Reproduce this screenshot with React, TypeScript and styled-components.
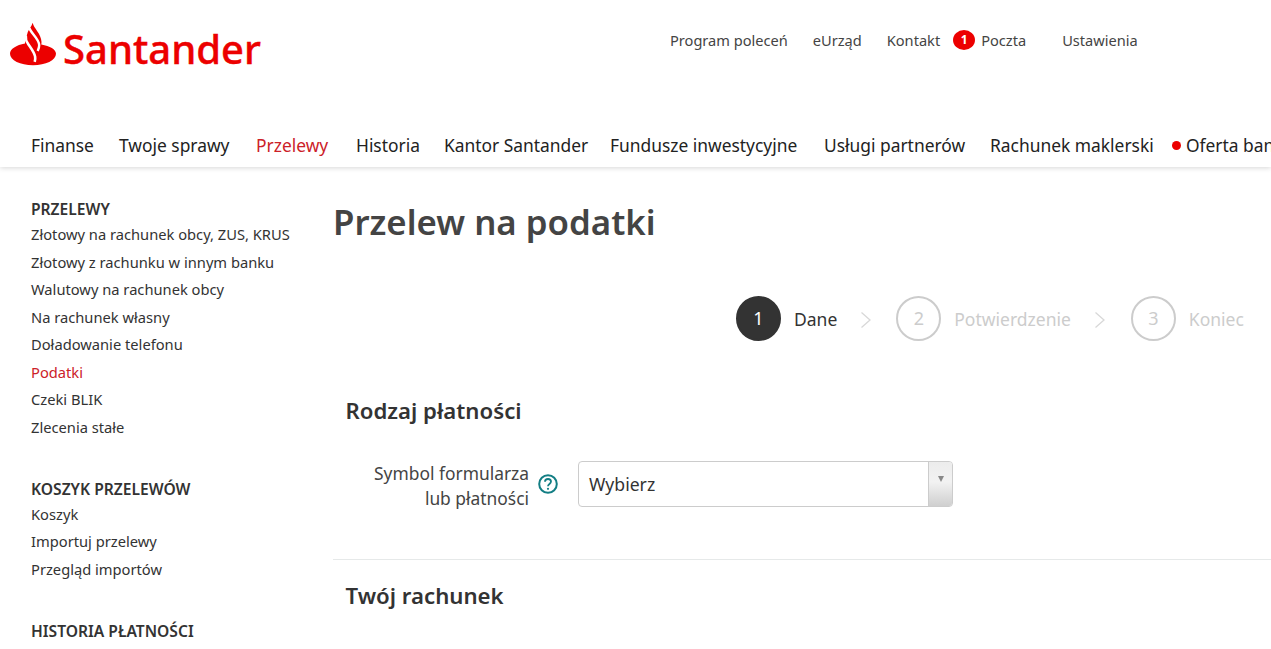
import React from "react";
import styled, { createGlobalStyle } from "styled-components";

const GlobalStyle = createGlobalStyle`
  html, body {
    margin: 0;
    padding: 0;
    height: 100%;
    overflow: hidden;
    background: #fff;
  }
  body {
    font-family: "Noto Sans", "Open Sans", sans-serif;
    color: #333;
  }
`;

const Page = styled.div`
  width: 1271px;
  height: 649px;
  overflow: hidden;
`;

const Header = styled.header`
  height: 167px;
  display: flex;
  flex-direction: column;
  box-shadow: 0 1px 5px rgba(0, 0, 0, 0.16);
  position: relative;
`;

const TopRow = styled.div`
  height: 133px;
  display: flex;
  align-items: flex-start;
`;

const Logo = styled.div`
  display: flex;
  align-items: flex-start;
  padding: 22px 0 0 10px;
  width: 660px;
`;

const Wordmark = styled.span`
  font-family: "Noto Sans", sans-serif;
  font-size: 40px;
  font-weight: 500;
  line-height: 54px;
  color: #ec0000;
  margin-left: 6px;
  -webkit-text-stroke: 0.4px #ec0000;
`;

const UtilityNav = styled.nav`
  display: flex;
  align-items: center;
  padding-top: 29px;
  font-size: 14.6px;
  line-height: 20px;
  color: #444;
`;

const UtilityLink = styled.span<{ $gap?: number }>`
  margin-left: ${(p) => p.$gap ?? 0}px;
  white-space: nowrap;
`;

const Badge = styled.span`
  width: 22px;
  height: 20px;
  border-radius: 50%;
  background: #ec0000;
  color: #fff;
  font-size: 12px;
  font-weight: 700;
  display: flex;
  align-items: center;
  justify-content: center;
  margin: 1px 6px 0 13px;
`;

const MainNav = styled.nav`
  display: flex;
  padding-left: 31px;
  font-size: 17.4px;
  line-height: 24px;
  color: #222;
  white-space: nowrap;
  overflow: hidden;
`;

const NavItem = styled.span<{ $active?: boolean; $width?: number }>`
  flex: none;
  color: ${(p) => (p.$active ? "#cc2128" : "#222")};
  width: ${(p) => (p.$width ? `${p.$width}px` : "auto")};
`;

const OfferItem = styled.span`
  flex: none;
  display: inline-flex;
  align-items: center;
  color: #222;
  &::before {
    content: "";
    width: 9px;
    height: 9px;
    border-radius: 50%;
    background: #ec0000;
    margin-right: 5px;
  }
`;

const Body = styled.div`
  display: flex;
`;

const Sidebar = styled.aside`
  flex: none;
  padding: 32px 0 0 31px;
  box-sizing: border-box;
  width: 333px;
`;

const SideGroup = styled.div`
  margin-bottom: 37.5px;
`;

const SideTitle = styled.div`
  font-size: 15.6px;
  font-weight: 600;
  line-height: 20px;
  color: #333;
  margin-bottom: 2px;
`;

const SideLink = styled.div<{ $active?: boolean }>`
  font-size: 14.7px;
  line-height: 27.5px;
  color: ${(p) => (p.$active ? "#cc2128" : "#333")};
  white-space: nowrap;
`;

const Main = styled.main`
  flex: 1;
  min-width: 0;
`;

const Title = styled.h1`
  margin: 32px 0 0;
  font-size: 34.8px;
  font-weight: 600;
  line-height: 46px;
  color: #444;
`;

const Steps = styled.div`
  display: flex;
  align-items: center;
  margin: 50px 0 0 403px;
  height: 46px;
`;

const StepCircle = styled.div<{ $current?: boolean }>`
  width: 45px;
  height: 45px;
  box-sizing: border-box;
  border-radius: 50%;
  flex: none;
  display: flex;
  align-items: center;
  justify-content: center;
  font-size: 18px;
  background: ${(p) => (p.$current ? "#333" : "#fff")};
  color: ${(p) => (p.$current ? "#fff" : "#ccc")};
  border: 2px solid ${(p) => (p.$current ? "#333" : "#ccc")};
`;

const StepLabel = styled.span<{ $current?: boolean }>`
  font-size: 17.5px;
  margin: 2px 0 0 13px;
  white-space: nowrap;
  color: ${(p) => (p.$current ? "#333" : "#ccc")};
`;

const StepArrow = styled.svg<{ $after?: number }>`
  width: 12px;
  height: 18px;
  margin: 4px ${(p) => p.$after ?? 24}px 0 23px;
  flex: none;
`;

const SectionTitle = styled.h2`
  margin: 0;
  padding-left: 12.5px;
  font-size: 22.2px;
  font-weight: 600;
  line-height: 30px;
  color: #333;
`;

const PaymentSection = styled.section`
  margin-top: 55px;
  padding-bottom: 52px;
  border-bottom: 1px solid #e6e9e9;
`;

const FormRow = styled.div`
  display: flex;
  align-items: center;
  height: 46px;
  margin-top: 35px;
`;

const FieldLabel = styled.label`
  width: 196px;
  margin-top: 4px;
  text-align: right;
  font-size: 17.4px;
  line-height: 25px;
  color: #444;
  white-space: nowrap;
`;

const HelpIcon = styled.svg`
  width: 22px;
  height: 22px;
  margin: 0 19px 0 8px;
  flex: none;
`;

const Select = styled.div`
  width: 373px;
  height: 44px;
  border: 1px solid #ccc;
  border-radius: 4px;
  display: flex;
  align-items: center;
  justify-content: space-between;
  overflow: hidden;
`;

const SelectValue = styled.span`
  padding-left: 10px;
  font-size: 17.6px;
  color: #333;
`;

const SelectButton = styled.div`
  width: 24px;
  height: 100%;
  display: flex;
  justify-content: center;
  padding-top: 14px;
  box-sizing: border-box;
  border-left: 1px solid #ccc;
  background: linear-gradient(#ececec, #f2f2f2 45%, #cfcfcf);
`;

const Caret = styled.div`
  width: 0;
  height: 0;
  border-left: 3.5px solid transparent;
  border-right: 3.5px solid transparent;
  border-top: 6px solid #888;
`;

const AccountSection = styled.section`
  margin-top: 21px;
`;

const Flame = () => (
  <svg width="47" height="44" viewBox="0 0 47 44">
    <path
      fill="#ec0000"
      d="M22.700.7C23.500 6 31.500 12 31.500 20c0 .9-.1 1.700-.2 2.500C40 24 46 27.500 46 31.800 46 38.300 35.700 43.300 23 43.300S0 38.300 0 31.800c0-4.700 6.300-8.600 15-10.200.1-4 1.600-7 2.800-11.600.8-2.200 3.700-5.500 4.900-9.300z"
    />
    <path
      d="M19.500 6c.6 4.500 9.600 10.600 9.700 17 .1 2.300-.7 4.200-1.500 6"
      fill="none"
      stroke="#fff"
      strokeWidth="2.400"
    />
    <path
      d="M15.800 13.500c-.5 3 .6 6 2.500 8.700 2.600 4 5.700 7.600 6.800 12.300.3 1.700.2 3.400-.4 5.300"
      fill="none"
      stroke="#fff"
      strokeWidth="2.600"
    />
  </svg>
);

const sideGroups = [
  {
    title: "PRZELEWY",
    links: [
      "Złotowy na rachunek obcy, ZUS, KRUS",
      "Złotowy z rachunku w innym banku",
      "Walutowy na rachunek obcy",
      "Na rachunek własny",
      "Doładowanie telefonu",
      "Podatki",
      "Czeki BLIK",
      "Zlecenia stałe",
    ],
  },
  { title: "KOSZYK PRZELEWÓW", links: ["Koszyk", "Importuj przelewy", "Przegląd importów"] },
  { title: "HISTORIA PŁATNOŚCI", links: [] },
];

const navItems = [
  { label: "Finanse", width: 88 },
  { label: "Twoje sprawy", width: 137 },
  { label: "Przelewy", width: 100 },
  { label: "Historia", width: 88 },
  { label: "Kantor Santander", width: 166 },
  { label: "Fundusze inwestycyjne", width: 214 },
  { label: "Usługi partnerów", width: 166 },
  { label: "Rachunek maklerski", width: 182 },
];

const Arrow = ({ after }: { after?: number }) => (
  <StepArrow viewBox="0 0 12 18" $after={after}>
    <path d="M1.500 1.500L10 9l-8.500 7.500" fill="none" stroke="#d8d8d8" strokeWidth="1.300" />
  </StepArrow>
);

export default function App() {
  return (
    <Page>
      <GlobalStyle />
      <Header>
        <TopRow>
          <Logo>
            <Flame />
            <Wordmark>Santander</Wordmark>
          </Logo>
          <UtilityNav>
            <UtilityLink>Program poleceń</UtilityLink>
            <UtilityLink $gap={25}>eUrząd</UtilityLink>
            <UtilityLink $gap={25}>Kontakt</UtilityLink>
            <Badge>1</Badge>
            <UtilityLink>Poczta</UtilityLink>
            <UtilityLink $gap={36}>Ustawienia</UtilityLink>
          </UtilityNav>
        </TopRow>
        <MainNav>
          {navItems.map((item) => (
            <NavItem key={item.label} $width={item.width} $active={item.label === "Przelewy"}>
              {item.label}
            </NavItem>
          ))}
          <OfferItem>Oferta banku</OfferItem>
        </MainNav>
      </Header>
      <Body>
        <Sidebar>
          {sideGroups.map((group) => (
            <SideGroup key={group.title}>
              <SideTitle>{group.title}</SideTitle>
              {group.links.map((link) => (
                <SideLink key={link} $active={link === "Podatki"}>
                  {link}
                </SideLink>
              ))}
            </SideGroup>
          ))}
        </Sidebar>
        <Main>
          <Title>Przelew na podatki</Title>
          <Steps>
            <StepCircle $current>1</StepCircle>
            <StepLabel $current>Dane</StepLabel>
            <Arrow />
            <StepCircle>2</StepCircle>
            <StepLabel>Potwierdzenie</StepLabel>
            <Arrow after={25} />
            <StepCircle>3</StepCircle>
            <StepLabel>Koniec</StepLabel>
          </Steps>
          <PaymentSection>
            <SectionTitle>Rodzaj płatności</SectionTitle>
            <FormRow>
              <FieldLabel>
                Symbol formularza
                <br />
                lub płatności
              </FieldLabel>
              <HelpIcon viewBox="0 0 22 22">
                <circle cx="11" cy="11" r="8.800" fill="none" stroke="#137e84" strokeWidth="2" />
                <path
                  d="M8 8.800c0-1.800 1.300-2.800 3-2.800s3 1 3 2.600c0 2.300-3 2.400-3 4.600"
                  fill="none"
                  stroke="#137e84"
                  strokeWidth="1.800"
                />
                <circle cx="11" cy="15.800" r="1.100" fill="#137e84" />
              </HelpIcon>
              <Select>
                <SelectValue>Wybierz</SelectValue>
                <SelectButton>
                  <Caret />
                </SelectButton>
              </Select>
            </FormRow>
          </PaymentSection>
          <AccountSection>
            <SectionTitle>Twój rachunek</SectionTitle>
          </AccountSection>
        </Main>
      </Body>
    </Page>
  );
}
